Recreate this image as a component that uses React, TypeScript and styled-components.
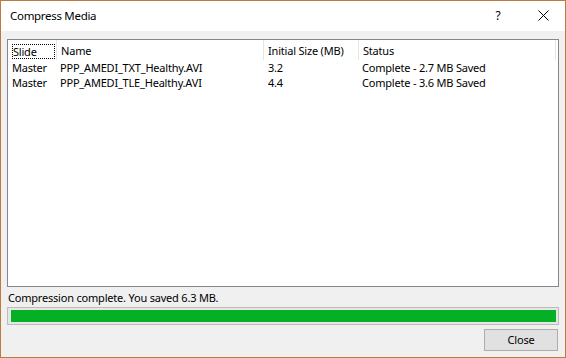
import React from 'react';
import styled, { createGlobalStyle } from 'styled-components';

interface IMediaRow {
  slide: string;
  name: string;
  size: string;
  status: string;
}

const rows: IMediaRow[] = [
  {
    slide: 'Master',
    name: 'PPP_AMEDI_TXT_Healthy.AVI',
    size: '3.2',
    status: 'Complete - 2.7 MB Saved',
  },
  {
    slide: 'Master',
    name: 'PPP_AMEDI_TLE_Healthy.AVI',
    size: '4.4',
    status: 'Complete - 3.6 MB Saved',
  },
];

const columns = ['Slide', 'Name', 'Initial Size (MB)', 'Status'];

const GlobalStyle = createGlobalStyle`
  html, body {
    margin: 0;
    padding: 0;
    background: #f0f0f0;
  }
  body {
    font-family: 'Noto Sans', 'Open Sans', sans-serif;
    font-size: 11px;
    letter-spacing: -0.2px;
    color: #000;
  }
`;

const DialogWindow = styled.div`
  width: 566px;
  height: 358px;
  box-sizing: border-box;
  border: 1px solid #bd7a3e;
  display: flex;
  flex-direction: column;
  background: #f0f0f0;
`;

const TitleBar = styled.div`
  height: 30px;
  background: #fff;
  display: flex;
  align-items: center;
  padding-left: 9px;
  flex-shrink: 0;
`;

const TitleText = styled.div`
  flex: 1;
  font-size: 11.5px;
  letter-spacing: -0.3px;
  padding-bottom: 1px;
`;

const HelpButton = styled.div`
  width: 20px;
  font-size: 12px;
  text-align: center;
  margin-right: 30px;
  padding-bottom: 1px;
`;

const CloseIcon = styled.svg`
  width: 11px;
  height: 11px;
  margin-right: 16px;
  margin-bottom: 1px;
`;

const DialogBody = styled.div`
  flex: 1;
  display: flex;
  flex-direction: column;
  padding: 8px 6px 0 6px;
`;

const ListBox = styled.div`
  height: 248px;
  box-sizing: border-box;
  border: 1px solid #828790;
  background: #fff;
  flex-shrink: 0;
`;

const ListGrid = styled.div`
  display: grid;
  grid-template-columns: 49px 207px 95px 197px 1fr;
`;

const HeaderCell = styled.div<{ $last?: boolean }>`
  height: 20px;
  box-sizing: border-box;
  border-right: 1px solid ${({ $last }) => ($last ? 'transparent' : '#e5e5e5')};
  display: flex;
  align-items: center;
  padding-left: 4px;
  white-space: nowrap;
`;

const FocusBox = styled.span`
  flex: 1;
  height: 15px;
  margin: 2px 1px 0 0;
  box-sizing: border-box;
  border: 1px dotted #000;
  display: flex;
  align-items: center;
`;

const RowCell = styled.div<{ $indent: number }>`
  height: 15px;
  line-height: 15px;
  padding-left: ${({ $indent }) => $indent}px;
  white-space: nowrap;
`;

const StatusLine = styled.div`
  height: 19px;
  line-height: 19px;
  margin-top: 1px;
  padding-left: 1px;
`;

const ProgressTrack = styled.div`
  height: 18px;
  box-sizing: border-box;
  border: 1px solid #bcbcbc;
  background: #e6e6e6;
  padding: 2px 2px 2px 3px;
  display: flex;
`;

const ProgressFill = styled.div`
  height: 100%;
  background: #06b025;
`;

const ButtonRow = styled.div`
  display: flex;
  justify-content: flex-end;
  margin-top: 4px;
`;

const DialogButton = styled.button`
  width: 74px;
  height: 22px;
  box-sizing: border-box;
  border: 1px solid #adadad;
  background: #e1e1e1;
  font-family: inherit;
  font-size: 11px;
  letter-spacing: -0.2px;
  color: #000;
  padding: 0 0 1px;
  margin-right: 1px;
`;

const App: React.FC = () => {
  const progress = 100;

  return (
    <>
      <GlobalStyle />
      <DialogWindow>
        <TitleBar>
          <TitleText>Compress Media</TitleText>
          <HelpButton>?</HelpButton>
          <CloseIcon viewBox="0 0 11 11">
            <path d="M0.5 0.5 L10.5 10.5 M10.5 0.5 L0.5 10.5" stroke="#000" strokeWidth="1" />
          </CloseIcon>
        </TitleBar>
        <DialogBody>
          <ListBox>
            <ListGrid>
              {columns.map((col, index) => (
                <HeaderCell key={col}>
                  {index === 0 ? <FocusBox>{col}</FocusBox> : col}
                </HeaderCell>
              ))}
              <HeaderCell $last />
              {rows.map((row) => (
                <React.Fragment key={row.name}>
                  <RowCell $indent={4}>{row.slide}</RowCell>
                  <RowCell $indent={3}>{row.name}</RowCell>
                  <RowCell $indent={4}>{row.size}</RowCell>
                  <RowCell $indent={3}>{row.status}</RowCell>
                  <RowCell $indent={0} />
                </React.Fragment>
              ))}
            </ListGrid>
          </ListBox>
          <StatusLine>Compression complete. You saved 6.3 MB.</StatusLine>
          <ProgressTrack>
            <ProgressFill style={{ width: `${progress}%` }} />
          </ProgressTrack>
          <ButtonRow>
            <DialogButton>Close</DialogButton>
          </ButtonRow>
        </DialogBody>
      </DialogWindow>
    </>
  );
};

export default App;
